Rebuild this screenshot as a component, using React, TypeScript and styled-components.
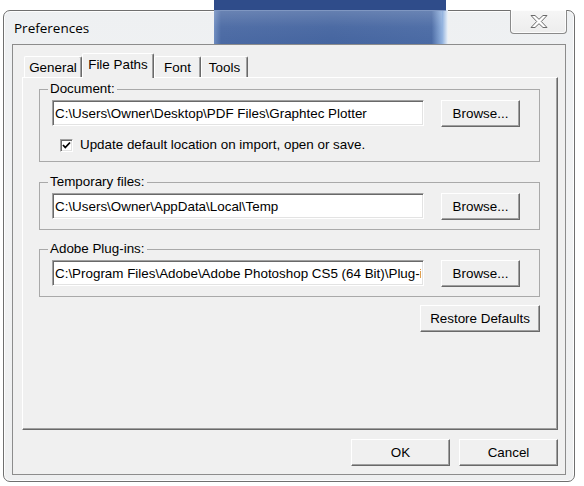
import React from "react";
import styled, { createGlobalStyle } from "styled-components";

const Global = createGlobalStyle`
  html, body { margin: 0; padding: 0; background: #ffffff; overflow: hidden; }
  * { box-sizing: border-box; }
`;

const UI_FONT = `"Liberation Sans", Arial, sans-serif`;
const UI_SIZE = "13.4px";

const Desktop = styled.div`
  position: relative;
  width: 584px;
  height: 486px;
  padding: 10px 0 0 3px;
  background: #ffffff;
`;

const Glimpse = styled.svg`
  position: absolute;
  left: 214px;
  top: 0;
  z-index: 2;
  pointer-events: none;
`;

const Window = styled.div`
  width: 572px;
  height: 472px;
  border: 1px solid #6f6f6f;
  border-radius: 7px;
  background: linear-gradient(180deg, #eef0f2 0%, #f2f3f4 40%, #eeeff0 100%);
  box-shadow: inset 0 0 0 1px rgba(255, 255, 255, 0.85);
  display: flex;
  flex-direction: column;
`;

const TitleBar = styled.div`
  height: 33px;
  display: flex;
  justify-content: space-between;
  align-items: flex-start;
  padding-left: 10px;
`;

const Title = styled.div`
  margin-top: 8px;
  font-family: "Open Sans", "Noto Sans", sans-serif;
  font-size: 13.5px;
  line-height: 18px;
  color: #000;
`;

const CloseButton = styled.div`
  width: 57px;
  height: 24px;
  margin-top: -1px;
  margin-right: 7px;
  border: 1px solid #8a8a8a;
  border-top: none;
  border-radius: 0 0 4px 4px;
  background: linear-gradient(180deg, #f6f6f6 0%, #ededed 100%);
  box-shadow: inset 0 0 0 1px rgba(255, 255, 255, 0.8);
  display: flex;
  align-items: center;
  justify-content: center;
`;

const Client = styled.div`
  flex: 1;
  margin: 0 8px 6px 8px;
  border: 1px solid #8c8c8c;
  background: #f0f0f0;
  display: flex;
  flex-direction: column;
  padding: 8px 7px 8px 9px;
  font-family: ${UI_FONT};
  font-size: ${UI_SIZE};
  color: #000;
`;

const TabStrip = styled.div`
  position: relative;
  z-index: 1;
  height: 25px;
  margin-bottom: -1px;
  padding-left: 2px;
  display: flex;
  align-items: flex-end;
`;

const Tab = styled.div<{ $active?: boolean; $w: number }>`
  width: ${(p) => p.$w}px;
  height: ${(p) => (p.$active ? 25 : 21)}px;
  margin-bottom: ${(p) => (p.$active ? 0 : 1)}px;
  border-top: 1px solid #ffffff;
  border-left: 1px solid #ffffff;
  border-right: 1px solid #696969;
  border-radius: 2px 2px 0 0;
  box-shadow: inset -1px 0 0 #a0a0a0;
  background: #f0f0f0;
  display: flex;
  align-items: center;
  justify-content: center;
  padding-bottom: ${(p) => (p.$active ? 3 : 0)}px;
  line-height: 15px;
  white-space: nowrap;
`;

const Panel = styled.div`
  flex: 1;
  border-top: 1px solid #ffffff;
  border-left: 1px solid #ffffff;
  border-right: 1px solid #696969;
  border-bottom: 1px solid #696969;
  box-shadow: inset -1px -1px 0 #a0a0a0;
  padding: 4px 17px 0 16px;
  display: flex;
  flex-direction: column;
`;

const Group = styled.fieldset<{ $gapAfter?: number }>`
  margin: 0 0 ${(p) => p.$gapAfter ?? 0}px 0;
  padding: 4px 12px 9px 12px;
  border: 1px solid #a9a9a9;
  min-width: 0;
`;

const Legend = styled.legend`
  margin-left: -4px;
  padding: 0 2px;
  font-size: ${UI_SIZE};
  line-height: 14px;
`;

const Row = styled.div`
  display: flex;
  align-items: flex-start;
  gap: 17px;
`;

const PathInput = styled.input`
  width: 372px;
  height: 26px;
  margin: 0;
  padding: 0 2px;
  border-style: solid;
  border-width: 1px;
  border-color: #a0a0a0 #ffffff #ffffff #a0a0a0;
  box-shadow: inset 1px 1px 0 #696969, inset -1px -1px 0 #e3e3e3;
  background: #ffffff;
  font-family: ${UI_FONT};
  font-size: ${UI_SIZE};
  color: #000;
  outline: none;
`;

const Button = styled.button<{ $w: number }>`
  width: ${(p) => p.$w}px;
  height: 27px;
  margin: 0;
  padding: 0;
  border-style: solid;
  border-width: 1px;
  border-color: #ffffff #696969 #696969 #ffffff;
  box-shadow: inset -1px -1px 0 #a0a0a0;
  background: #f0f0f0;
  font-family: ${UI_FONT};
  font-size: ${UI_SIZE};
  color: #000;
  cursor: default;
`;

const CheckRow = styled.label`
  margin-top: 11px;
  padding-left: 8px;
  height: 14px;
  display: flex;
  align-items: center;
  gap: 7px;
  line-height: 14px;
`;

const CheckBox = styled.span`
  width: 13px;
  height: 13px;
  border-style: solid;
  border-width: 1px;
  border-color: #a0a0a0 #ffffff #ffffff #a0a0a0;
  box-shadow: inset 1px 1px 0 #696969, inset -1px -1px 0 #e3e3e3;
  background: #ffffff;
  display: flex;
  align-items: center;
  justify-content: center;
`;

const RestoreRow = styled.div`
  margin-top: 8px;
  display: flex;
  justify-content: flex-end;
`;

const Footer = styled.div`
  margin-top: 9px;
  display: flex;
  justify-content: flex-end;
  gap: 9px;
`;

function PathGroup({
  label,
  value,
  gapAfter,
  children,
}: {
  label: string;
  value: string;
  gapAfter?: number;
  children?: React.ReactNode;
}) {
  return (
    <Group $gapAfter={gapAfter}>
      <Legend>{label}</Legend>
      <Row>
        <PathInput readOnly value={value} />
        <Button $w={79}>Browse...</Button>
      </Row>
      {children}
    </Group>
  );
}

export default function App() {
  return (
    <>
      <Global />
      <Desktop>
        <Glimpse width="234" height="44" viewBox="0 0 234 44">
          <defs>
            <linearGradient id="glassH" x1="0" y1="0" x2="1" y2="0">
              <stop offset="0" stopColor="#6d8bbf" />
              <stop offset="0.03" stopColor="#4a69a3" />
              <stop offset="0.5" stopColor="#4565a0" />
              <stop offset="0.93" stopColor="#4a6aa4" />
              <stop offset="0.975" stopColor="#8fb0de" />
              <stop offset="1" stopColor="#eef3f8" />
            </linearGradient>
            <linearGradient id="glassV" x1="0" y1="0" x2="0" y2="1">
              <stop offset="0" stopColor="#ffffff" stopOpacity="0.18" />
              <stop offset="0.5" stopColor="#ffffff" stopOpacity="0.04" />
              <stop offset="1" stopColor="#ffffff" stopOpacity="0" />
            </linearGradient>
          </defs>
          <rect x="0" y="0" width="232" height="10" fill="#2f4c8a" />
          <rect x="0" y="10" width="234" height="34" fill="url(#glassH)" />
          <rect x="0" y="10" width="228" height="34" fill="url(#glassV)" />
          <rect x="0" y="10" width="232" height="1" fill="#7f97c2" />
        </Glimpse>
        <Window>
          <TitleBar>
            <Title>Preferences</Title>
            <CloseButton>
              <svg width="18" height="13" viewBox="0 0 18 13">
                <path
                  d="M1 0.5 H5 L9 4.3 L13 0.5 H17 L11.3 6.5 L17 12.5 H13 L9 8.7 L5 12.5 H1 L6.7 6.5 Z"
                  fill="#ffffff"
                  stroke="#6a6a6a"
                  strokeWidth="1"
                  strokeLinejoin="round"
                />
              </svg>
            </CloseButton>
          </TitleBar>
          <Client>
            <TabStrip>
              <Tab $w={58}>General</Tab>
              <Tab $w={72} $active>
                File Paths
              </Tab>
              <Tab $w={47}>Font</Tab>
              <Tab $w={47}>Tools</Tab>
            </TabStrip>
            <Panel>
              <PathGroup
                label="Document:"
                value="C:\Users\Owner\Desktop\PDF Files\Graphtec Plotter"
                gapAfter={13}
              >
                <CheckRow>
                  <CheckBox>
                    <svg width="9" height="9" viewBox="0 0 9 9">
                      <path d="M1 4 L3.3 6.5 L8 1.5" fill="none" stroke="#000" strokeWidth="1.8" />
                    </svg>
                  </CheckBox>
                  Update default location on import, open or save.
                </CheckRow>
              </PathGroup>
              <PathGroup
                label="Temporary files:"
                value="C:\Users\Owner\AppData\Local\Temp"
                gapAfter={12}
              />
              <PathGroup
                label="Adobe Plug-ins:"
                value="C:\Program Files\Adobe\Adobe Photoshop CS5 (64 Bit)\Plug-ins"
              />
              <RestoreRow>
                <Button $w={120}>Restore Defaults</Button>
              </RestoreRow>
            </Panel>
            <Footer>
              <Button $w={99}>OK</Button>
              <Button $w={99}>Cancel</Button>
            </Footer>
          </Client>
        </Window>
      </Desktop>
    </>
  );
}
